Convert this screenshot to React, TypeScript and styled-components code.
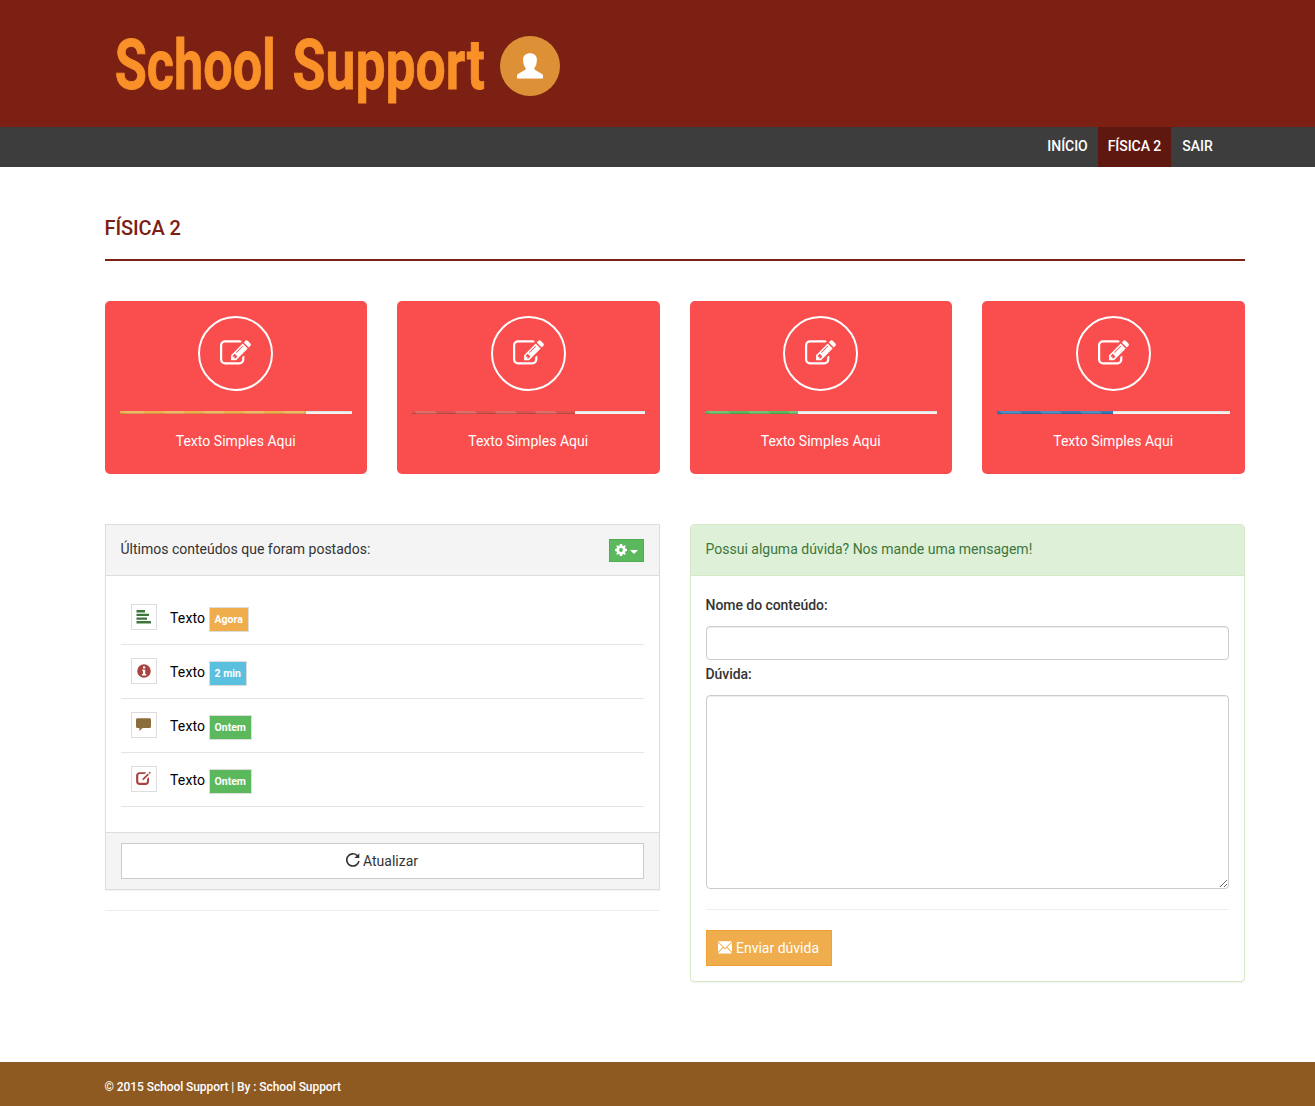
import React from "react";
import styled, { createGlobalStyle } from "styled-components";

const GlobalStyle = createGlobalStyle`
  *, *::before, *::after { box-sizing: border-box; }
  body {
    margin: 0;
    background: #fff;
    color: #000;
    font-family: Roboto, "Liberation Sans", sans-serif;
    font-size: 14px;
    line-height: 30px;
  }
`;

/* ---------- icons ---------- */

const Glyph = styled.svg<{ $size: number }>`
  display: block;
  flex: none;
  width: ${(p) => p.$size}px;
  height: ${(p) => p.$size}px;
  fill: currentColor;
`;

const UserIcon = () => (
  <Glyph $size={26} viewBox="0 0 26 26">
    <path d="M13 .2c4.200 0 6.900 2.300 6.900 6.400 0 3.600-.8 6.600-2.500 8.400v1.600l6.800 4c1.200.7 1.800 1.300 1.800 2.400v2.400H0V23c0-1.100.6-1.700 1.800-2.400l6.800-4V15C6.900 13.200 6.100 10.200 6.100 6.600 6.100 2.500 8.800.2 13 .2z" />
  </Glyph>
);

const PencilSquareIcon = () => (
  <Glyph $size={31} viewBox="0 0 1792 1792">
    <path d="M888 1184l116-116-152-152-116 116v56h96v96h56zm440-720q-16-16-33 1l-350 350q-17 17-1 33t33-1l350-350q17-17 1-33zm80 594v190q0 119-84.5 203.5t-203.500 84.500h-832q-119 0-203.500-84.500t-84.500-203.500v-832q0-119 84.500-203.500t203.500-84.500h832q63 0 117 25 15 7 18 23 3 17-9 29l-49 49q-14 14-32 8-23-6-45-6h-832q-66 0-113 47t-47 113v832q0 66 47 113t113 47h832q66 0 113-47t47-113v-126q0-13 9-22l64-64q15-15 35-7t20 29zm-96-738l288 288-672 672h-288v-288zm444 132l-92 92-288-288 92-92q28-28 68-28t68 28l152 152q28 28 28 68t-28 68z" />
  </Glyph>
);

const CogIcon = () => (
  <Glyph $size={12} viewBox="0 0 12 12">
    <path
      fillRule="evenodd"
      d="M4.900 0h2.200l.4 1.700 1 .4L10 1.200 10.800 2l-.9 1.500.4 1L12 4.900v2.200l-1.700.4-.4 1 .9 1.500-.8.800-1.500-.9-1 .4L7.100 12H4.900l-.4-1.700-1-.4-1.500.9-.8-.8.900-1.500-.4-1L0 7.100V4.900l1.700-.4.4-1L1.200 2 2 1.200l1.500.9 1-.4zM6 4.100a1.900 1.900 0 1 0 0 3.800 1.900 1.900 0 0 0 0-3.800z"
    />
  </Glyph>
);

const AlignLeftIcon = () => (
  <Glyph $size={15} viewBox="0 0 15 15">
    <path d="M.5 1h8.500v2.400H.5zM.5 4.700H13v2.400H.5zM.5 8.400h10.500v2.400H.5zM.5 12h14.500v2.400H.5z" />
  </Glyph>
);

const InfoIcon = () => (
  <Glyph $size={14} viewBox="0 0 14 14">
    <path
      fillRule="evenodd"
      d="M7 .2a6.800 6.800 0 1 1 0 13.600A6.800 6.800 0 0 1 7 .2zM6 2.500v2.100h2.200V2.500zM5 5.700v1.100h1v3.300H4.900v1.300h4.300v-1.300h-1V5.700z"
    />
  </Glyph>
);

const CommentIcon = () => (
  <Glyph $size={15} viewBox="0 0 15 14">
    <path d="M1.500.8h12c.9 0 1.500.6 1.500 1.500v6.700c0 .9-.6 1.500-1.500 1.500H6.600L3.400 13.600v-3.100H1.500C.6 10.500 0 9.900 0 9V2.300C0 1.400.6.8 1.500.8z" />
  </Glyph>
);

const EditIcon = () => (
  <Glyph $size={15} viewBox="0 0 15 14">
    <path d="M10.400.7 8.600 2.600H3.900c-1 0-1.600.6-1.600 1.600v5.500c0 1 .6 1.600 1.600 1.600h5.500c1 0 1.600-.6 1.600-1.600V7.600L13 5.600v4.500c0 2-1.400 3.400-3.400 3.400H3.500c-2 0-3.400-1.400-3.400-3.400V4.100C.1 2.100 1.500.7 3.500.7z" />
    <path d="M11.700 2 13 3.300 8.200 8.100l-2 .8.7-2.100zM12.500 1.200l.8-.8c.2-.2.5-.2.700 0l.6.6c.2.200.2.500 0 .7l-.8.8z" />
  </Glyph>
);

const RefreshIcon = () => (
  <Glyph $size={14} viewBox="0 0 14 14">
    <path d="M11.600 1.900 13.300.2v4.900H8.400l2.100-2.100A5.300 5.300 0 1 0 12.100 8h1.600A6.900 6.900 0 1 1 11.600 1.900z" />
  </Glyph>
);

const EnvelopeIcon = () => (
  <Glyph $size={14} viewBox="0 0 14 14">
    <path d="M0 .2h14L7 7.100zM0 1.600l4.600 4.500L0 11zM14 1.600V11L9.400 6.100zM5.300 6.800 7 8.500l1.700-1.700L14 12.300v.3H0v-.3z" />
  </Glyph>
);

/* ---------- page chrome ---------- */

const Inner = styled.div`
  width: 1140px;
  margin-left: 104.5px;
`;

const Header = styled.header`
  height: 127px;
  background: #7b2013;
`;

const Brand = styled(Inner)`
  display: flex;
  align-items: flex-start;
  padding: 26px 0 0 10.5px;
`;

const Logo = styled.svg`
  display: block;
  width: 385px;
  height: 84px;
  fill: #fa9128;
  stroke: #fa9128;
  stroke-width: 0.8px;
  font-family: Roboto, sans-serif;
  font-size: 69px;
  font-weight: 700;
`;

const Avatar = styled.div`
  display: flex;
  align-items: center;
  justify-content: center;
  width: 60px;
  height: 60px;
  margin-top: 10px;
  border-radius: 50%;
  background: #de9036;
  color: #fff;
`;

const NavBar = styled.nav`
  height: 40px;
  background: #3d3d3d;
`;

const NavList = styled(Inner)`
  display: flex;
  justify-content: flex-end;
  padding-right: 20.5px;
`;

const NavLink = styled.a<{ $active?: boolean; $width: number }>`
  width: ${(p) => p.$width}px;
  height: 40px;
  text-align: center;
  line-height: 39px;
  font-weight: 500;
  letter-spacing: -0.05px;
  color: #fff;
  text-decoration: none;
  background: ${(p) => (p.$active ? "#5f180f" : "transparent")};
`;

const Main = styled(Inner).attrs({ as: "main" })`
  height: 895px;
  padding-top: 46px;
`;

const PageTitle = styled.h1`
  height: 48px;
  margin: 0 0 40px;
  border-bottom: 2px solid #7b2013;
  font-size: 20px;
  font-weight: 500;
  line-height: 30px;
  letter-spacing: -0.1px;
  color: #7b2013;
`;

const Footer = styled.footer`
  height: 44px;
  padding-top: 10px;
  background: #8f5a22;
  color: #fff;
  font-size: 12px;
  font-weight: 500;
  letter-spacing: -0.07px;
`;

/* ---------- progress cards ---------- */

const CardGrid = styled.section`
  display: grid;
  grid-template-columns: repeat(4, 1fr);
  gap: 30px;
  margin-bottom: 50px;
`;

const Card = styled.article`
  display: flex;
  flex-direction: column;
  align-items: center;
  height: 173px;
  padding: 15px;
  border-radius: 5px;
  background: #fa4d4d;
  color: #fff;
`;

const Ring = styled.div`
  display: flex;
  align-items: center;
  justify-content: center;
  width: 75px;
  height: 75px;
  padding-bottom: 1px;
  border: 2px solid #fff;
  border-radius: 50%;
`;

const Track = styled.div`
  width: 100%;
  height: 3px;
  margin: 20px 0 12px;
  background: #f5f5f5;
  box-shadow: inset 0 1px 2px rgba(0, 0, 0, 0.1);
`;

const Fill = styled.div<{ $color: string; $percent: number }>`
  width: ${(p) => p.$percent}%;
  height: 100%;
  background-color: ${(p) => p.$color};
  background-image: linear-gradient(
    45deg,
    rgba(255, 255, 255, 0.15) 25%,
    transparent 25%,
    transparent 50%,
    rgba(255, 255, 255, 0.15) 50%,
    rgba(255, 255, 255, 0.15) 75%,
    transparent 75%
  );
  background-size: 40px 40px;
  background-position: 3px 0;
  box-shadow: inset 0 -1px 0 rgba(0, 0, 0, 0.15);
`;

const CardLabel = styled.span`
  letter-spacing: 0.03px;
`;

/* ---------- panels ---------- */

const Columns = styled.section`
  display: grid;
  grid-template-columns: 1fr 1fr;
  align-items: start;
  gap: 30px;
`;

const Panel = styled.section<{ $success?: boolean }>`
  border: 1px solid ${(p) => (p.$success ? "#d6e9c6" : "#ddd")};
  border-radius: ${(p) => (p.$success ? "4px" : "0")};
  background: #fff;
  box-shadow: 0 1px 1px rgba(0, 0, 0, 0.05);
`;

const PanelHeading = styled.header<{ $success?: boolean }>`
  display: flex;
  justify-content: space-between;
  align-items: flex-start;
  height: 51px;
  padding: 9px 15px;
  border-bottom: 1px solid ${(p) => (p.$success ? "#d6e9c6" : "#ddd")};
  border-radius: ${(p) => (p.$success ? "3px 3px 0 0" : "0")};
  background: ${(p) => (p.$success ? "#dff0d8" : "#f4f4f4")};
  color: ${(p) => (p.$success ? "#3c763d" : "#333")};
`;

const SettingsButton = styled.button`
  display: flex;
  align-items: center;
  gap: 3px;
  width: 35px;
  height: 23px;
  margin-top: 5px;
  padding: 0 0 1px 5px;
  border: 1px solid #4cae4c;
  background: #5cb85c;
  color: #fff;
`;

const Caret = styled.span`
  margin-top: 4px;
  border: 4px solid transparent;
  border-top-color: #fff;
  border-bottom: 0;
`;

const FeedList = styled.ul`
  margin: 0;
  padding: 15px 15px 25px;
  list-style: none;
`;

const FeedRow = styled.li`
  display: flex;
  align-items: flex-start;
  height: 54px;
  padding: 13px 10px 0;
  border-bottom: 1px solid #e4e4e4;
`;

const IconBox = styled.span<{ $color: string }>`
  display: flex;
  align-items: center;
  justify-content: center;
  width: 26px;
  height: 26px;
  margin-right: 13.5px;
  padding-bottom: 1px;
  border: 1px solid #ddd;
  color: ${(p) => p.$color};
`;

const FeedText = styled.span`
  width: 38.5px;
  line-height: 29px;
  letter-spacing: 0.15px;
`;

const Badge = styled.span<{ $color: string }>`
  height: 25px;
  margin-top: 3px;
  padding: 0 5px;
  border: 1px solid #ddd;
  background: ${(p) => p.$color};
  color: #fff;
  font-size: 10.5px;
  font-weight: 700;
  line-height: 24px;
`;

const PanelFooter = styled.footer`
  padding: 10px 15px;
  border-top: 1px solid #ddd;
  background: #f4f4f4;
`;

const RefreshButton = styled.button`
  display: flex;
  align-items: center;
  justify-content: center;
  gap: 3px;
  width: 100%;
  height: 36px;
  padding: 0;
  border: 1px solid #ccc;
  background: #fff;
  color: #333;
  font: inherit;

  svg {
    margin-bottom: 2px;
  }
`;

const Divider = styled.hr`
  margin: 20px 0;
  border: 0;
  border-top: 1px solid #eee;
`;

const Form = styled.form`
  padding: 15px;
`;

const Label = styled.label`
  display: block;
  height: 35px;
  line-height: 28px;
  font-weight: 500;
  letter-spacing: -0.05px;
  color: #333;
`;

const field = `
  display: block;
  width: 100%;
  padding: 6px 12px;
  border: 1px solid #ccc;
  border-radius: 4px;
  background: #fff;
  box-shadow: inset 0 1px 1px rgba(0, 0, 0, 0.075);
  font: inherit;
`;

const TextInput = styled.input`
  ${field}
  height: 34px;
`;

const MessageArea = styled.textarea`
  ${field}
  height: 194px;
  resize: both;
`;

const SendButton = styled.button`
  display: flex;
  align-items: center;
  gap: 4px;
  width: 126px;
  height: 36px;
  padding: 0 0 0 11.500px;
  border: 1px solid #eea236;
  background: #f0ad4e;
  color: #fff;
  font: inherit;
  white-space: nowrap;
`;

/* ---------- data ---------- */

const cards = [
  { color: "#f0ad4e", percent: 80 },
  { color: "#d9534f", percent: 70 },
  { color: "#5cb85c", percent: 40 },
  { color: "#337ab7", percent: 50 },
];

const feed = [
  { icon: <AlignLeftIcon />, iconColor: "#3c763d", when: "Agora", color: "#f0ad4e" },
  { icon: <InfoIcon />, iconColor: "#a94442", when: "2 min", color: "#5bc0de" },
  { icon: <CommentIcon />, iconColor: "#8a6d3b", when: "Ontem", color: "#5cb85c" },
  { icon: <EditIcon />, iconColor: "#a94442", when: "Ontem", color: "#5cb85c" },
];

export default function App() {
  return (
    <>
      <GlobalStyle />
      <Header>
        <Brand>
          <Logo viewBox="0 0 385 84">
            <text transform="translate(-.3 62.500) scale(.743 1.010)" textLength="217" lengthAdjust="spacingAndGlyphs">
              School
            </text>
            <text transform="translate(177.500 62.500) scale(.766 1.010)" textLength="251" lengthAdjust="spacingAndGlyphs">
              Support
            </text>
          </Logo>
          <Avatar>
            <UserIcon />
          </Avatar>
        </Brand>
      </Header>
      <NavBar>
        <NavList>
          <NavLink $width={61}>INÍCIO</NavLink>
          <NavLink $width={73} $active>FÍSICA 2</NavLink>
          <NavLink $width={53}>SAIR</NavLink>
        </NavList>
      </NavBar>

      <Main>
        <PageTitle>FÍSICA 2</PageTitle>

        <CardGrid>
          {cards.map((card) => (
            <Card key={card.color}>
              <Ring>
                <PencilSquareIcon />
              </Ring>
              <Track>
                <Fill $color={card.color} $percent={card.percent} />
              </Track>
              <CardLabel>Texto Simples Aqui</CardLabel>
            </Card>
          ))}
        </CardGrid>

        <Columns>
          <div>
            <Panel>
              <PanelHeading>
                <span>Últimos conteúdos que foram postados:</span>
                <SettingsButton type="button">
                  <CogIcon />
                  <Caret />
                </SettingsButton>
              </PanelHeading>
              <FeedList>
                {feed.map((item, i) => (
                  <FeedRow key={i}>
                    <IconBox $color={item.iconColor}>{item.icon}</IconBox>
                    <FeedText>Texto</FeedText>
                    <Badge $color={item.color}>{item.when}</Badge>
                  </FeedRow>
                ))}
              </FeedList>
              <PanelFooter>
                <RefreshButton type="button">
                  <RefreshIcon />
                  <span>Atualizar</span>
                </RefreshButton>
              </PanelFooter>
            </Panel>
            <Divider />
          </div>

          <Panel $success>
            <PanelHeading $success>
              <span>Possui alguma dúvida? Nos mande uma mensagem!</span>
            </PanelHeading>
            <Form>
              <Label htmlFor="subject">Nome do conteúdo:</Label>
              <TextInput id="subject" type="text" />
              <Label htmlFor="message">Dúvida:</Label>
              <MessageArea id="message" />
              <Divider />
              <SendButton type="button">
                <EnvelopeIcon />
                <span>Enviar dúvida</span>
              </SendButton>
            </Form>
          </Panel>
        </Columns>
      </Main>

      <Footer>
        <Inner>© 2015 School Support | By : School Support</Inner>
      </Footer>
    </>
  );
}
